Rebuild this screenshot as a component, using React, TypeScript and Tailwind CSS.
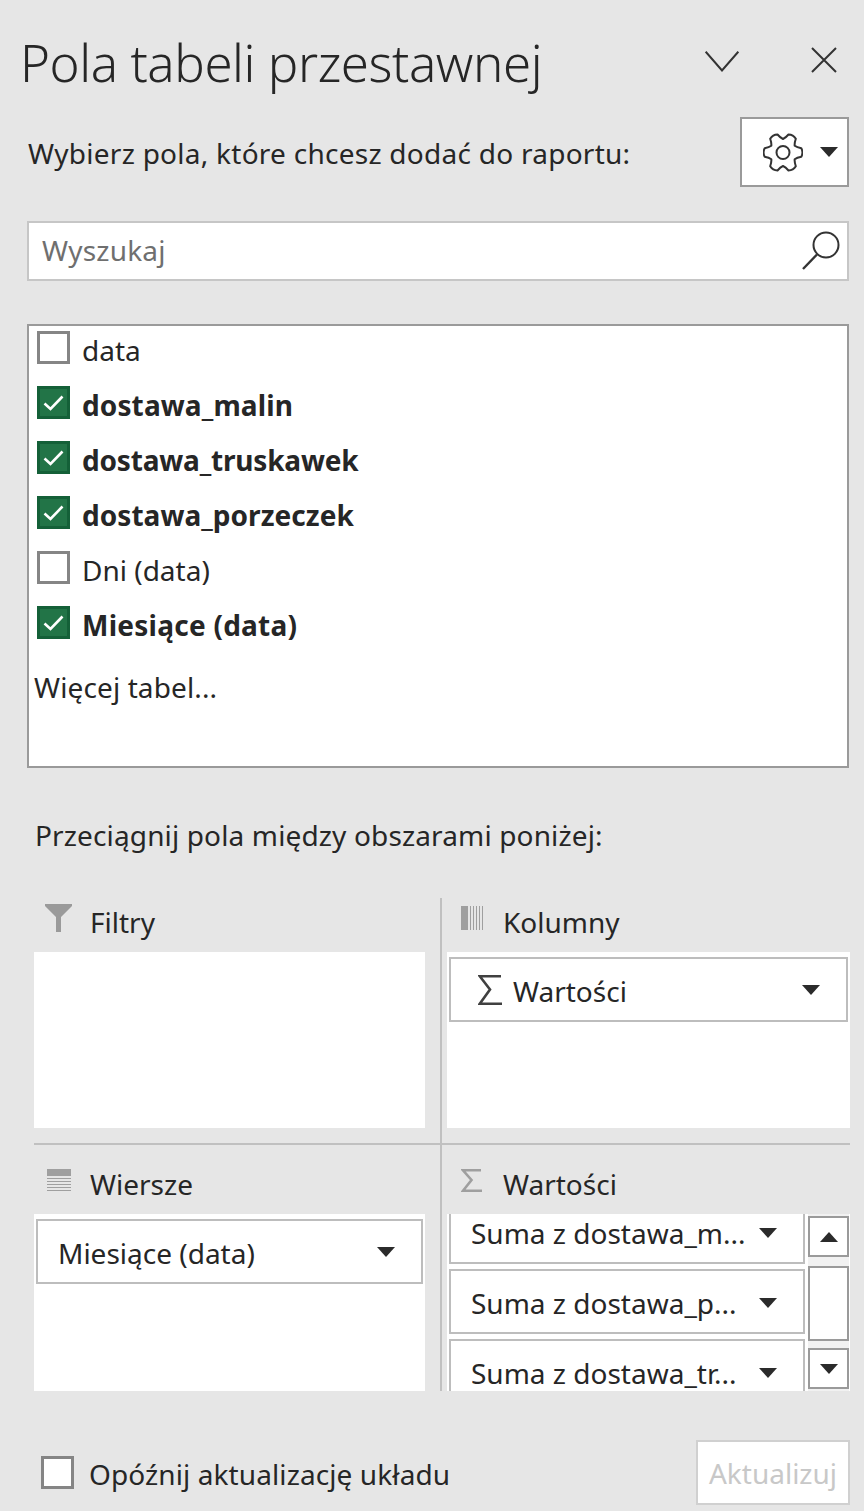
import type { ReactNode } from "react";

const font = "font-['Noto_Sans','Open_Sans',sans-serif]";

function Caret({ up = false }: { up?: boolean }) {
  return (
    <svg width="18" height="10" viewBox="0 0 18 10" className="block shrink-0">
      <path d={up ? "M0 10 L9 0 L18 10 Z" : "M0 0 L18 0 L9 10 Z"} fill="#2b2b2b" />
    </svg>
  );
}

function Check({ checked }: { checked?: boolean }) {
  if (!checked) return <div className="w-[33px] h-[33px] border-[3px] border-[#858585] bg-white shrink-0" />;
  return (
    <div className="w-[33px] h-[33px] border-[3px] border-[#146038] bg-[#227447] shrink-0 flex items-center justify-center">
      <svg width="21" height="16" viewBox="0 0 21 16">
        <path d="M1.5 8.5 L7.5 14 L19.5 1.5" fill="none" stroke="#fff" strokeWidth="2.6" />
      </svg>
    </div>
  );
}

function Field({ label, bold, checked, track = "" }: { label: string; bold?: boolean; checked?: boolean; track?: string }) {
  return (
    <div className="h-[55px] flex items-center pl-[8px] gap-[12px] shrink-0">
      <Check checked={checked} />
      <span className={`mt-[4px] text-[28px] leading-[40px] text-[#262626] ${bold ? "font-bold" : ""} ${track}`}>{label}</span>
    </div>
  );
}

function Chip({ label, w, sigma, pl = "pl-[20px]" }: { label: string; w: string; sigma?: boolean; pl?: string }) {
  return (
    <div className={`${w} h-[65px] shrink-0 border-[2px] border-[#bdbdbd] bg-white flex items-center ${pl} pr-[26px]`}>
      {sigma && (
        <svg width="24" height="30" viewBox="0 0 24 30" className="mr-[11px] shrink-0">
          <path d="M23 1.3 H1.8 L12 14.5 L1.8 28.7 H24" fill="none" stroke="#404040" strokeWidth="2.6" />
        </svg>
      )}
      <span className="flex-1 mt-[3px] text-[28px] leading-[40px] text-[#262626] whitespace-nowrap">{label}</span>
      <div className="mt-[1px]"><Caret /></div>
    </div>
  );
}

function ValueChip({ label, top }: { label: string; top?: boolean }) {
  return (
    <div className={`w-[356px] h-[65px] ${top ? "-mt-[15px]" : "mt-[5px]"} shrink-0 border-[2px] border-[#bdbdbd] bg-white flex items-start pl-[20px] pr-[26px] pt-[15px]`}>
      <span className="flex-1 text-[28px] leading-[34px] text-[#262626] whitespace-nowrap">{label}</span>
      <div className="mt-[12px]"><Caret /></div>
    </div>
  );
}

function AreaHead({ icon, label, gap, textTop, h }: { icon: ReactNode; label: string; gap: string; textTop: string; h: string }) {
  return (
    <div className={`${h} flex items-start ${gap} shrink-0`}>
      {icon}
      <span className={`text-[28px] leading-[40px] text-[#262626] ${textTop}`}>{label}</span>
    </div>
  );
}

const FilterIcon = (
  <svg width="27" height="28" viewBox="0 0 27 28" className="ml-[11px] mt-[6px] shrink-0">
    <path d="M0 0 H27 V2 L16 13 V28 H11 V13 L0 2 Z" fill="#9a9a9a" />
  </svg>
);

const ColumnsIcon = (
  <svg width="22" height="24" viewBox="0 0 22 24" className="ml-[14px] mt-[8px] shrink-0">
    <rect x="0" y="0" width="7" height="24" fill="#9f9f9f" />
    {[9, 12, 15, 18, 21].map((x) => (
      <rect key={x} x={x} y="0" width="1" height="24" fill="#9f9f9f" />
    ))}
  </svg>
);

const RowsIcon = (
  <svg width="24" height="22" viewBox="0 0 24 22" className="ml-[13px] mt-[24px] shrink-0">
    <rect x="0" y="0" width="24" height="7" fill="#9f9f9f" />
    {[9, 12, 15, 18, 21].map((y) => (
      <rect key={y} x="0" y={y} width="24" height="1" fill="#9f9f9f" />
    ))}
  </svg>
);

const SigmaIcon = (
  <svg width="21" height="23" viewBox="0 0 21 23" className="ml-[14px] mt-[24px] shrink-0">
    <path d="M20 1.3 H2 L10.5 11 L2 21.7 H21" fill="none" stroke="#9f9f9f" strokeWidth="2.6" />
  </svg>
);

// Six lobes around the centre, as in the Excel settings gear.
const gearPath = (() => {
  const cx = 20;
  const cy = 19.5;
  const pt = (deg: number, r: number) => {
    const a = (deg * Math.PI) / 180;
    return `${(cx + r * Math.cos(a)).toFixed(2)} ${(cy + r * Math.sin(a)).toFixed(2)}`;
  };
  let d = "";
  for (let i = 0; i < 6; i++) {
    const t = i * 60;
    d += `${i === 0 ? "M" : "L"}${pt(t - 30, 13.5)} `;
    d += `Q${pt(t - 20, 14.8)} ${pt(t - 13, 18.8)} `;
    d += `Q${pt(t, 20.6)} ${pt(t + 13, 18.8)} `;
    d += `Q${pt(t + 20, 14.8)} ${pt(t + 30, 13.5)} `;
  }
  return d + "Z";
})();

export default function App() {
  return (
    <div className={`${font} w-[864px] h-[1511px] bg-[#e6e6e6] overflow-hidden flex flex-col`}>
      {/* header */}
      <div className="h-[117px] flex items-start pl-[20px] shrink-0">
        <h1 className="text-[51px] leading-[70px] mt-[27px] font-light text-[#262626] tracking-[-0.43px] flex-1 whitespace-nowrap">Pola tabeli przestawnej</h1>
        <svg width="34" height="21" viewBox="0 0 34 21" className="mt-[51px] mr-[72px]">
          <path d="M0.7 0.7 L17 19.5 L33.3 0.7" fill="none" stroke="#333" strokeWidth="2" />
        </svg>
        <svg width="26" height="26" viewBox="0 0 26 26" className="mt-[47px] mr-[27px]">
          <path d="M1 1 L25 25 M25 1 L1 25" fill="none" stroke="#333" strokeWidth="2" />
        </svg>
      </div>

      {/* label + settings */}
      <div className="h-[70px] flex items-center pl-[28px] pr-[15px] shrink-0">
        <span className="flex-1 mt-[1px] text-[28px] leading-[40px] text-[#262626] tracking-[0.26px] whitespace-nowrap">Wybierz pola, które chcesz dodać do raportu:</span>
        <div className="w-[109px] h-[70px] border-[2px] border-[#9a9a9a] bg-white flex items-center pl-[21px] gap-[17px]">
          <svg width="40" height="39" viewBox="0 0 40 39" className="shrink-0">
            <path d={gearPath} fill="none" stroke="#333" strokeWidth="2" strokeLinejoin="round" />
            <circle cx="20" cy="19.5" r="6.5" fill="none" stroke="#333" strokeWidth="2" />
          </svg>
          <Caret />
        </div>
      </div>

      {/* search */}
      <div className="h-[60px] mt-[34px] ml-[27px] w-[822px] border-[2px] border-[#c6c6c6] bg-white flex items-center pl-[13px] pr-[6px] shrink-0">
        <span className="flex-1 -mt-[2px] text-[28px] leading-[40px] text-[#6f6f6f] tracking-[0.2px]">Wyszukaj</span>
        <svg width="40" height="40" viewBox="0 0 40 40">
          <circle cx="25" cy="14" r="12.5" fill="none" stroke="#333" strokeWidth="2" />
          <path d="M16 23.5 L2 38" fill="none" stroke="#333" strokeWidth="2.4" />
        </svg>
      </div>

      {/* field list */}
      <div className="h-[444px] mt-[43px] ml-[27px] w-[822px] border-[2px] border-[#9a9a9a] bg-white flex flex-col shrink-0 overflow-hidden">
        <div className="-mt-[6px] flex flex-col">
          <Field label="data" />
          <Field label="dostawa_malin" bold checked track="tracking-[0.12px]" />
          <Field label="dostawa_truskawek" bold checked track="tracking-[-0.18px]" />
          <Field label="dostawa_porzeczek" bold checked track="tracking-[0.05px]" />
          <Field label="Dni (data)" />
          <Field label="Miesiące (data)" bold checked track="tracking-[0.25px]" />
        </div>
        <div className="pl-[5px] mt-[17px] text-[28px] leading-[40px] text-[#262626] tracking-[0.12px]">Więcej tabel...</div>
      </div>

      <div className="pl-[35px] h-[40px] mt-[47px] text-[28px] leading-[40px] text-[#262626] tracking-[0.14px] shrink-0">Przeciągnij pola między obszarami poniżej:</div>

      {/* areas */}
      <div className="mt-[43px] ml-[34px] w-[816px] h-[493px] grid grid-cols-[408px_408px] grid-rows-[247px_246px] shrink-0">
        <div className="border-r-[2px] border-b-[2px] border-[#c0c0c0] pr-[15px]">
          <AreaHead icon={FilterIcon} label="Filtry" gap="gap-[18px]" textTop="mt-[4px]" h="h-[54px]" />
          <div className="h-[176px] bg-white" />
        </div>
        <div className="border-b-[2px] border-[#c0c0c0] pl-[5px]">
          <AreaHead icon={ColumnsIcon} label="Kolumny" gap="gap-[20px]" textTop="mt-[4px]" h="h-[54px]" />
          <div className="h-[176px] bg-white pt-[5px] pl-[2px]">
            <Chip label="Wartości" w="w-[399px]" sigma pl="pl-[27px]" />
          </div>
        </div>
        <div className="border-r-[2px] border-[#c0c0c0] pr-[15px] flex flex-col">
          <AreaHead icon={RowsIcon} label="Wiersze" gap="gap-[19px]" textTop="mt-[19px]" h="h-[69px]" />
          <div className="h-[177px] bg-white pt-[5px] pl-[2px]">
            <Chip label="Miesiące (data)" w="w-[387px]" />
          </div>
        </div>
        <div className="pl-[5px] flex flex-col">
          <AreaHead icon={SigmaIcon} label="Wartości" gap="gap-[21px]" textTop="mt-[19px]" h="h-[69px]" />
          <div className="h-[177px] bg-white flex overflow-hidden">
            <div className="w-[361px] pl-[2px] flex flex-col shrink-0">
              <ValueChip label="Suma z dostawa_m..." top />
              <ValueChip label="Suma z dostawa_p..." />
              <ValueChip label="Suma z dostawa_tr..." />
            </div>
            <div className="w-[41px] bg-[#f1f1f1] flex flex-col py-[2px] shrink-0">
              <div className="h-[41px] border-[2px] border-[#9a9a9a] bg-white flex items-center justify-center"><Caret up /></div>
              <div className="h-[75px] mt-[9px] border-[2px] border-[#9a9a9a] bg-white" />
              <div className="h-[41px] mt-[7px] border-[2px] border-[#9a9a9a] bg-white flex items-center justify-center"><Caret /></div>
            </div>
          </div>
        </div>
      </div>

      {/* footer */}
      <div className="mt-[49px] h-[65px] flex items-center pl-[41px] pr-[14px] shrink-0">
        <Check />
        <span className="ml-[15px] flex-1 mt-[2px] text-[28px] leading-[40px] text-[#262626] tracking-[0.1px]">Opóźnij aktualizację układu</span>
        <div className="w-[154px] h-[65px] border-[2px] border-[#d0d0d0] bg-white flex items-center justify-center text-[28px] leading-[40px] text-[#c8c8c8]">Aktualizuj</div>
      </div>
    </div>
  );
}
